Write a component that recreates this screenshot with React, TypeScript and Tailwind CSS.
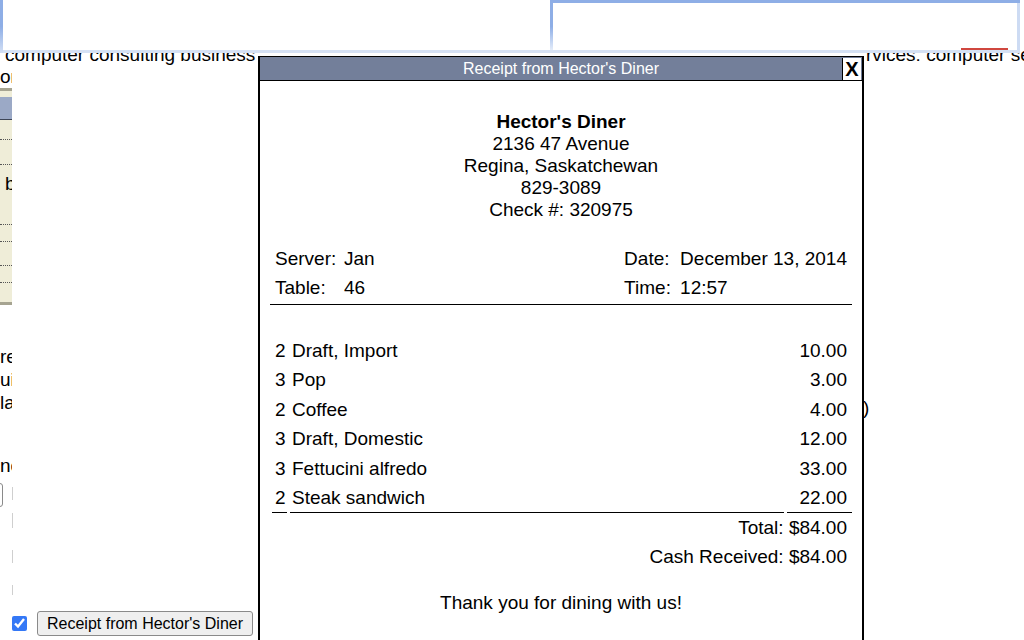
// Receipt popup over a partly hidden page

const items: [string, string, string][] = [
  ["2", "Draft, Import", "10.00"],
  ["3", "Pop", "3.00"],
  ["2", "Coffee", "4.00"],
  ["3", "Draft, Domestic", "12.00"],
  ["3", "Fettucini alfredo", "33.00"],
  ["2", "Steak sandwich", "22.00"],
];

function TopFields() {
  return (
    <div className="absolute top-0 left-0 z-20 flex h-[53px] w-full">
      {/* left field, scrolled so its top is off screen */}
      <div className="flex flex-1 bg-white">
        <div className="w-[3px] bg-gradient-to-b from-[#8eaee6] from-50% to-[#d3dff4]" />
        <div className="flex flex-1 flex-col justify-end">
          <div className="h-[3px] bg-[#d5e1f4]" />
        </div>
      </div>
      {/* right field, focused */}
      <div className="mr-[4px] flex w-[470px] flex-col bg-white">
        <div className="h-[3px] bg-[#8eaee6]" />
        <div className="flex flex-1">
          <div className="w-[3px] bg-gradient-to-b from-[#8eaee6] from-50% to-[#e4ecf9]" />
          <div className="flex flex-1 items-end justify-end pr-[9px]">
            <div className="h-[2px] w-[47px] bg-[#d0473f]" />
          </div>
          <div className="w-[3px] bg-[#cddbf3]" />
        </div>
        <div className="h-[3px] bg-[#d5e1f4]" />
      </div>
    </div>
  );
}

function LeftSliver() {
  const rowLines = [20, 25, 60, 17, 24, 17];
  return (
    <div className="w-[12px] shrink-0 overflow-hidden whitespace-nowrap">
      <div className="h-[22px]">on</div>
      {/* table peeking out */}
      <div className="flex w-[12px] flex-col bg-[#efedd8]">
        <div className="h-[3px] bg-[#a6a491]" />
        <div className="h-[6px]" />
        <div className="h-[23px] border-b border-[#3d4556] bg-[#9ba9c6]" />
        {rowLines.map((h, i) => (
          <div
            key={i}
            style={{ height: h }}
            className="flex items-start border-b border-dotted border-[#555]"
          >
            {i === 2 && <span className="pt-[8px] pl-[5px]">b</span>}
          </div>
        ))}
        <div className="h-[19px]" />
        <div className="h-[3px] bg-[#a6a491]" />
      </div>
      <div className="mt-[40px] leading-[23px]">
        <div>re</div>
        <div>ui</div>
        <div>la</div>
      </div>
      <div className="mt-[41px] h-[22px]">ne</div>
      <div className="mt-[6px] -ml-[17px] h-[24px] w-[20px] rounded-[3px] border border-[#8a8a8a]" />
    </div>
  );
}

function MiddleColumn() {
  return (
    <div className="flex w-[246px] shrink-0 flex-col">
      <div className="mt-[421px] flex flex-col">
        <div className="h-[13px] w-px bg-[#cfcfcf]" />
        <div className="mt-[13px] h-[15px] w-px bg-[#cfcfcf]" />
        <div className="mt-[22px] h-[13px] w-px bg-[#cfcfcf]" />
        <div className="mt-[22px] h-[10px] w-px bg-[#cfcfcf]" />
      </div>
      <div className="mt-[16px] flex items-center gap-[10px]">
        <input
          type="checkbox"
          checked
          readOnly
          className="h-[15px] w-[15px] accent-[#3478f6]"
        />
        <button className="h-[25px] w-[216px] rounded-[3px] border border-[#8a8a8a] bg-[#efefef] text-[16px] leading-none text-black">
          Receipt from Hector's Diner
        </button>
      </div>
    </div>
  );
}

function Receipt() {
  return (
    <div className="absolute top-[56px] left-[258px] z-10 h-[600px] w-[606px] border-x-2 border-t border-black bg-white text-black">
      <div className="relative flex h-[24px] items-center justify-center border-b border-black bg-[#737f9a] text-[16px] text-white">
        Receipt from Hector's Diner
        <div className="absolute top-[1px] right-[1px] flex h-[22px] w-[19px] items-center justify-center border-l border-black bg-white text-[20px] font-bold text-black">
          X
        </div>
      </div>

      <div className="px-[10px] pt-[30px] text-[19px] leading-[22px]">
        <div className="text-center">
          <div className="font-bold">Hector's Diner</div>
          <div>2136 47 Avenue</div>
          <div>Regina, Saskatchewan</div>
          <div>829-3089</div>
          <div>Check #: 320975</div>
        </div>

        <div className="mt-[23px] grid grid-cols-[74px_1fr_60px_auto] border-b border-black pb-[2px]">
          <div className="flex h-[29px] items-center pl-[5px]">Server:</div>
          <div className="flex h-[29px] items-center">Jan</div>
          <div className="flex h-[29px] items-center pl-[4px]">Date:</div>
          <div className="flex h-[29px] items-center pr-[5px]">December 13, 2014</div>
          <div className="flex h-[29px] items-center pl-[5px]">Table:</div>
          <div className="flex h-[29px] items-center">46</div>
          <div className="flex h-[29px] items-center pl-[4px]">Time:</div>
          <div className="flex h-[29px] items-center pr-[5px]">12:57</div>
        </div>

        <div className="mt-[31px] ml-[2px] grid grid-cols-[15px_1fr_65px] gap-x-[3px]">
          {items.map(([qty, name, price], i) => {
            const last = i === items.length - 1;
            const cell = last ? "h-[29.5px] border-b border-black" : "h-[29.5px]";
            return [
              <div key={i + "q"} className={`${cell} flex items-center pl-[3px]`}>{qty}</div>,
              <div key={i + "n"} className={`${cell} flex items-center pl-[2px]`}>{name}</div>,
              <div key={i + "p"} className={`${cell} flex items-center justify-end pr-[5px]`}>{price}</div>,
            ];
          })}
        </div>

        <div className="flex h-[29.5px] items-center justify-end pr-[5px]">Total: $84.00</div>
        <div className="flex h-[29.5px] items-center justify-end pr-[5px]">Cash Received: $84.00</div>

        <div className="mt-[20px] text-center">Thank you for dining with us!</div>
      </div>
    </div>
  );
}

export default function App() {
  return (
    <div className="relative h-[640px] w-[1024px] overflow-hidden bg-white pt-[44px] font-['Liberation_Sans',Arial,sans-serif] text-[19px] leading-[22px] text-black">
      <TopFields />

      <div className="flex h-[22px] whitespace-nowrap">
        <span className="pl-[5px]">computer consulting business</span>
        <span className="ml-auto w-[158px] overflow-hidden">rvices: computer services</span>
      </div>

      <div className="flex h-[574px]">
        <LeftSliver />
        <MiddleColumn />
        <div className="flex-1" />
        <div className="w-[161px] pt-[331px]">)</div>
      </div>

      <Receipt />
    </div>
  );
}
